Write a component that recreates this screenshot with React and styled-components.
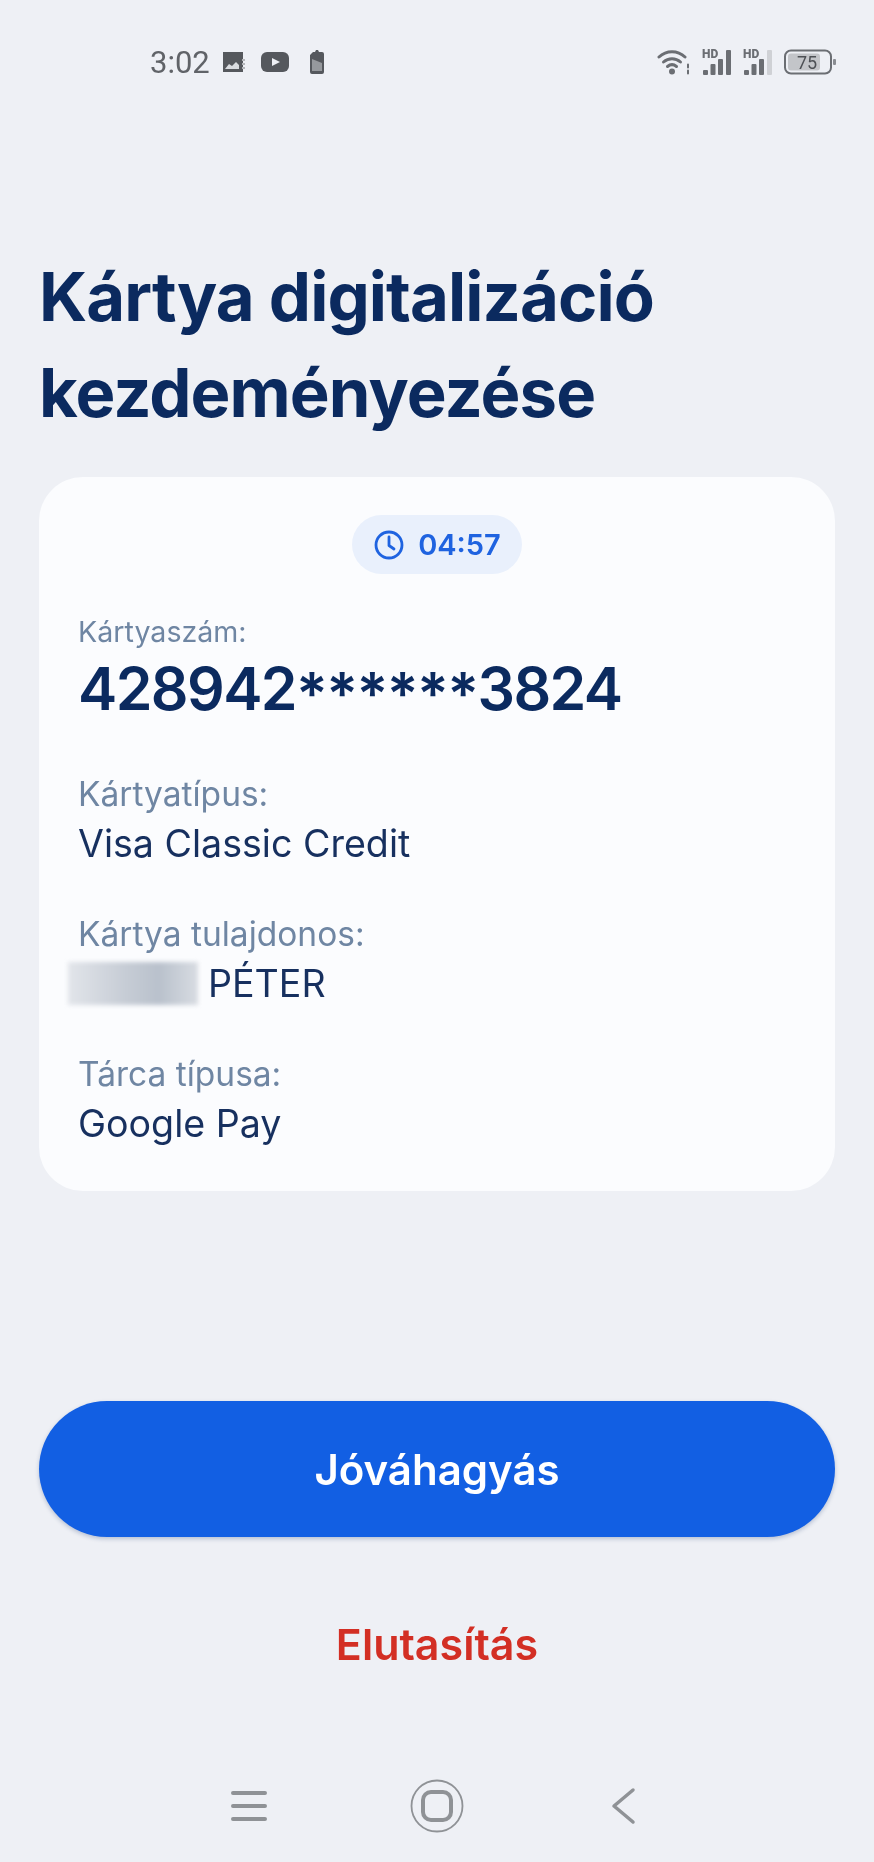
import styled, { createGlobalStyle } from "styled-components";

const GlobalStyle = createGlobalStyle`
  html, body {
    margin: 0;
    padding: 0;
    background: #eef0f5;
  }
  * { box-sizing: border-box; }
`;

const Page = styled.div`
  width: 874px;
  height: 1862px;
  display: flex;
  flex-direction: column;
  background: #eef0f5;
  font-family: Inter, "Liberation Sans", sans-serif;
  filter: blur(0.6px);
`;

const StatusBar = styled.div`
  height: 62px;
  margin-top: 31px;
  display: flex;
  align-items: center;
  justify-content: space-between;
  padding: 0 36px 0 150px;
`;

const StatusGroup = styled.div`
  display: flex;
  align-items: center;
  gap: ${(p) => p.$gap}px;
`;

const Clock = styled.span`
  font-family: Roboto, sans-serif;
  font-size: 31px;
  color: #606368;
  margin-right: -3px;
`;

const Content = styled.main`
  flex: 1;
  display: flex;
  flex-direction: column;
  padding: 156px 39px 0;
`;

const Title = styled.h1`
  margin: 0 0 36px;
  color: #0b2a5f;
  font-size: 67px;
  line-height: 96px;
  font-weight: 700;
  letter-spacing: -0.9px;
`;

const Card = styled.section`
  height: 714px;
  background: #fbfcfe;
  border-radius: 44px;
  padding: 38px 39px 0;
  display: flex;
  flex-direction: column;
`;

const Timer = styled.div`
  align-self: center;
  height: 59px;
  width: 170px;
  border-radius: 30px;
  background: #e9f0fc;
  color: #1f63e0;
  display: flex;
  align-items: center;
  justify-content: center;
  gap: 13px;
  font-size: 29px;
  font-weight: 600;
`;

const Field = styled.div`
  margin-top: ${(p) => p.$top}px;
`;

const Label = styled.div`
  color: #6f86a3;
  font-size: ${(p) => (p.$small ? 28.600 : 33.500)}px;
  line-height: ${(p) => (p.$small ? 38 : 42)}px;
`;

const Value = styled.div`
  color: #17305f;
  font-size: 37.600px;
  line-height: 58px;
  display: flex;
  align-items: center;
`;

const CardNumber = styled.div`
  color: #0b2a5f;
  font-size: 59px;
  font-weight: 600;
  line-height: 76px;
  letter-spacing: -1.600px;
`;

const Mask = styled.span`
  vertical-align: -0.08em;
`;

const Redacted = styled.span`
  width: 130px;
  height: 43px;
  margin: 0 10px 0 -10px;
  background: linear-gradient(90deg, #e2e5ea, #c6ccd5 45%, #b9c1cc 70%, #d8dce2);
  filter: blur(2px);
`;

const Approve = styled.button`
  height: 136px;
  margin-top: 210px;
  border: 0;
  border-radius: 68px;
  background: #125fe3;
  color: #fff;
  font-family: inherit;
  font-size: 42px;
  font-weight: 600;
  box-shadow: 0 2px 4px rgba(20, 50, 110, 0.25);
`;

const Reject = styled.button`
  margin-top: 79px;
  align-self: center;
  border: 0;
  padding: 0;
  background: none;
  color: #d32f24;
  font-family: inherit;
  font-size: 43px;
  line-height: 56px;
  font-weight: 600;
`;

const NavBar = styled.nav`
  height: 54px;
  margin-bottom: 29px;
  display: flex;
  align-items: center;
  padding: 0 0 0 230px;
  gap: 142px;
`;

const PictureIcon = () => (
  <svg width="22" height="22" viewBox="0 0 22 22">
    <path d="M0 1h20v20H0z" fill="#55585d" />
    <path d="M2 18l4-5 3 2 4-4 3 3v4H2z" fill="#d9dbdf" />
    <path d="M19 8h3v2h-3zM19 12h3v2h-3zM19 16h3v2h-3z" fill="#b4b6ba" />
  </svg>
);

const VideoIcon = () => (
  <svg width="28" height="22" viewBox="0 0 28 22">
    <rect x="0" y="1" width="28" height="20" rx="6" fill="#55585d" />
    <path d="M11 7l8 4-8 4z" fill="#eef0f5" />
  </svg>
);

const SimIcon = () => (
  <svg width="22" height="24" viewBox="0 0 22 24">
    <path d="M8 2h2l1-2h2l1 2h3a2 2 0 0 1 2 2v18a2 2 0 0 1-2 2H7a2 2 0 0 1-2-2V5z" fill="#55585d" />
    <path d="M7 9l10 4v8H7z" fill="#96999d" />
  </svg>
);

const WifiIcon = () => (
  <svg width="34" height="26" viewBox="0 0 34 26" fill="none" stroke="#6b6e73" strokeWidth="3" strokeLinecap="round">
    <path d="M2 8C9.500 1 20.500 1 28 8" />
    <path d="M6.500 13c5-4.500 12-4.500 17 0" />
    <path d="M10.500 17.500c3-2.500 6-2.500 9 0" />
    <circle cx="15" cy="22.500" r="1.500" fill="#6b6e73" />
    <path d="M31 15.500v3M31 21.500v3" strokeWidth="2" />
  </svg>
);

const SignalIcon = ({ dim }) => (
  <svg width="30" height="28" viewBox="0 0 30 28">
    <text x="0" y="10" fontFamily="Roboto, sans-serif" fontSize="12" fontWeight="900" fill="#6b6e73">HD</text>
    <rect x="1" y="22" width="5" height="5" rx="1" fill="#6b6e73" />
    <rect x="8.500" y="16" width="5" height="11" rx="1" fill="#6b6e73" />
    <rect x="16" y="11" width="5" height="16" rx="1" fill="#6b6e73" />
    <rect x="24" y="2" width="5" height="25" rx="1" fill={dim ? "#cfd1d5" : "#6b6e73"} />
  </svg>
);

const BatteryIcon = () => (
  <svg width="54" height="26" viewBox="0 0 54 26">
    <rect x="1" y="1.500" width="46" height="23" rx="6" fill="none" stroke="#6b6e73" strokeWidth="2" />
    <rect x="4" y="4.500" width="32" height="17" rx="3" fill="#c3c5c9" />
    <text x="23" y="19.500" textAnchor="middle" fontFamily="Roboto, sans-serif" fontSize="18" fill="#4d5055">75</text>
    <rect x="49" y="10" width="3" height="6" rx="1" fill="#8a8d92" />
  </svg>
);

const TimerIcon = () => (
  <svg width="32" height="32" viewBox="0 0 32 32" fill="none" stroke="#1f63e0" strokeWidth="2.800" strokeLinecap="round" strokeLinejoin="round">
    <circle cx="16" cy="16" r="13" />
    <path d="M16 8v8.500l5 3.500" />
  </svg>
);

const MenuIcon = () => (
  <svg width="38" height="34" viewBox="0 0 38 34" stroke="#8f9296" strokeWidth="4" strokeLinecap="round">
    <path d="M3 4h32M3 17h32M3 30h32" />
  </svg>
);

const HomeIcon = () => (
  <svg width="54" height="54" viewBox="0 0 54 54" fill="none" stroke="#8f9296">
    <circle cx="27" cy="27" r="25.500" strokeWidth="1.800" />
    <rect x="13" y="13" width="28" height="28" rx="8" strokeWidth="4" />
  </svg>
);

const BackIcon = () => (
  <svg width="30" height="38" viewBox="0 0 30 38" fill="none" stroke="#8f9296" strokeWidth="3.500" strokeLinecap="round" strokeLinejoin="round">
    <path d="M27 3L8 19l19 16" />
  </svg>
);

const App = () => (
  <Page>
    <GlobalStyle />
    <StatusBar>
      <StatusGroup $gap={16}>
        <Clock>3:02</Clock>
        <PictureIcon />
        <VideoIcon />
        <SimIcon />
      </StatusGroup>
      <StatusGroup $gap={11}>
        <WifiIcon />
        <SignalIcon />
        <SignalIcon dim />
        <BatteryIcon />
      </StatusGroup>
    </StatusBar>
    <Content>
      <Title>
        Kártya digitalizáció
        <br />
        kezdeményezése
      </Title>
      <Card>
        <Timer>
          <TimerIcon />
          04:57
        </Timer>
        <Field $top={39}>
          <Label $small>Kártyaszám:</Label>
          <CardNumber>
            428942<Mask>******</Mask>3824
          </CardNumber>
        </Field>
        <Field $top={41}>
          <Label>Kártyatípus:</Label>
          <Value>Visa Classic Credit</Value>
        </Field>
        <Field $top={40}>
          <Label>Kártya tulajdonos:</Label>
          <Value>
            <Redacted />
            PÉTER
          </Value>
        </Field>
        <Field $top={40}>
          <Label>Tárca típusa:</Label>
          <Value>Google Pay</Value>
        </Field>
      </Card>
      <Approve>Jóváhagyás</Approve>
      <Reject>Elutasítás</Reject>
    </Content>
    <NavBar>
      <MenuIcon />
      <HomeIcon />
      <BackIcon />
    </NavBar>
  </Page>
);

export default App;
